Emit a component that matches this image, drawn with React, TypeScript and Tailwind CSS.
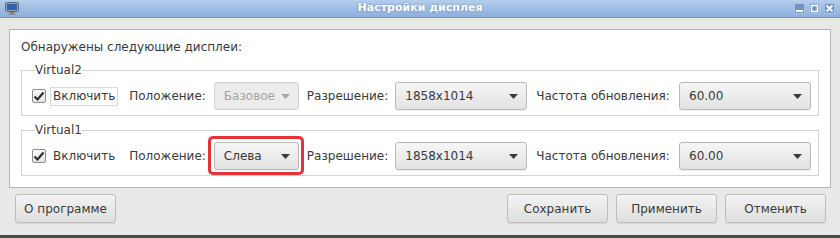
import type { ReactNode } from "react";

const font = { fontFamily: '"DejaVu Sans", "Liberation Sans", sans-serif' };

function ComboArrow({ dim }: { dim?: boolean }) {
  return (
    <svg width="9" height="5" viewBox="0 0 9 5" className="ml-auto shrink-0">
      <path d="M0 0 L9 0 L4.5 5 Z" fill={dim ? "#a6a6a6" : "#3a3a3a"} />
    </svg>
  );
}

function Combo({ value, width, disabled, highlight }: { value: string; width: string; disabled?: boolean; highlight?: boolean }) {
  return (
    <div className={`relative shrink-0 ${width}`}>
      <div
        className={
          disabled
            ? "flex h-[28px] items-center gap-[6px] rounded-[3px] border border-[#cfcfcf] bg-[#ececec] pl-[9px] pr-[8px] text-[12px] text-[#a3a3a3]"
            : "flex h-[28px] items-center gap-[6px] rounded-[3px] border border-[#b9b9b9] bg-gradient-to-b from-[#f6f6f6] to-[#e2e2e2] pl-[9px] pr-[8px] text-[12px] text-[#3a3a3a] shadow-[0_1px_0_rgba(0,0,0,0.06)]"
        }
      >
        <span className="whitespace-nowrap">{value}</span>
        <ComboArrow dim={disabled} />
      </div>
      {highlight && (
        <div className="pointer-events-none absolute -bottom-[5px] -left-[6px] -right-[5px] -top-[6px] rounded-[5px] border-[3px] border-[#e5323a]" />
      )}
    </div>
  );
}

function CheckBox() {
  return (
    <div className="flex h-[14px] w-[14px] shrink-0 items-center justify-center rounded-[2px] border border-[#8e8e8e] bg-gradient-to-b from-[#fafafa] to-[#e4e4e4]">
      <svg width="12" height="11" viewBox="0 0 12 11">
        <path d="M1.5 5.5 L4.5 8.5 L10.5 1.5" fill="none" stroke="#2c2c2c" strokeWidth="2.2" />
      </svg>
    </div>
  );
}

function Group({ name, focus, position, disabledPos, highlight }: { name: string; focus?: boolean; position: string; disabledPos?: boolean; highlight?: boolean }) {
  return (
    <fieldset className="border border-[#d3d3d3] pb-[5px] pl-[10px] pr-[7px] pt-[4px]">
      <legend className="ml-[3px] px-0 text-[12px] leading-[16px] text-[#3a3a3a]">{name}</legend>
      <div className="flex items-center whitespace-nowrap text-[12px] text-[#3a3a3a]">
        <CheckBox />
        <span className={`ml-[4px] border px-[2px] leading-[17px] ${focus ? "border-[#d9d9d9] bg-white" : "border-transparent"}`}>Включить</span>
        <span className="ml-[11px]">Положение:</span>
        <div className="ml-[8px]">
          <Combo value={position} width="w-[85px]" disabled={disabledPos} highlight={highlight} />
        </div>
        <span className="ml-[8px]">Разрешение:</span>
        <div className="ml-[7px]">
          <Combo value="1858x1014" width="w-[132px]" />
        </div>
        <span className="ml-[9px]">Частота обновления:</span>
        <div className="ml-auto">
          <Combo value="60.00" width="w-[132px]" />
        </div>
      </div>
    </fieldset>
  );
}

function Button({ children, width }: { children: ReactNode; width: string }) {
  return (
    <button
      type="button"
      className={`${width} flex h-[29px] items-center justify-center rounded-[3px] border border-[#bdbdbd] bg-gradient-to-b from-[#f3f3f3] to-[#dfdfdf] text-[12px] text-[#3a3a3a] shadow-[0_1px_0_rgba(0,0,0,0.06)]`}
    >
      {children}
    </button>
  );
}

function WinButton({ kind }: { kind: "min" | "max" | "close" }) {
  return (
    <div className="flex h-[11px] w-[11px] items-center justify-center border border-[#a9c1e2] bg-[#7393c2]">
      <svg width="9" height="9" viewBox="0 0 9 9">
        {kind === "min" && <rect x="1" y="6" width="7" height="2" fill="#fff" />}
        {kind === "max" && <rect x="1.5" y="1.5" width="6" height="6" fill="none" stroke="#fff" strokeWidth="1.6" />}
        {kind === "close" && <path d="M1.5 1.5 L7.5 7.5 M7.5 1.5 L1.5 7.5" stroke="#fff" strokeWidth="1.8" />}
      </svg>
    </div>
  );
}

export default function App() {
  return (
    <div className="flex h-[238px] w-[840px] flex-col overflow-hidden bg-[#e8e8e7]" style={font}>
      <div className="relative flex h-[18px] shrink-0 items-center border-b border-[#7293c2] bg-gradient-to-b from-[#b4cdeb] to-[#8cafdc] px-[5px]">
        <svg width="14" height="13" viewBox="0 0 14 13">
          <rect x="0.5" y="0.5" width="13" height="9" rx="1" fill="#9aa3ad" stroke="#5e6670" />
          <rect x="2" y="2" width="10" height="6" fill="#2f63b8" />
          <rect x="5" y="10" width="4" height="1.5" fill="#6c737c" />
          <rect x="3" y="11.5" width="8" height="1.5" fill="#8a9099" />
        </svg>
        <span className="absolute inset-x-0 text-center text-[11px] font-bold text-white [text-shadow:0_0_2px_rgba(60,90,140,0.6)]">Настройки дисплея</span>
        <div className="relative ml-auto flex gap-[4px]">
          <WinButton kind="min" />
          <WinButton kind="max" />
          <WinButton kind="close" />
        </div>
      </div>

      <div className="flex flex-col px-[9px] pt-[11px]">
        <div className="flex h-[159px] flex-col border border-[#b5b5b5] bg-white px-[11px] pt-[9px]">
          <div className="text-[12px] leading-[16px] text-[#3a3a3a]">Обнаружены следующие дисплеи:</div>
          <div className="mt-[7px] flex flex-col gap-[6px]">
            <Group name="Virtual2" focus position="Базовое" disabledPos />
            <Group name="Virtual1" position="Слева" highlight />
          </div>
        </div>

        <div className="mt-[6px] flex items-center gap-[8px] pl-[6px] pr-[5px]">
          <Button width="w-[101px]">О программе</Button>
          <div className="flex-1" />
          <Button width="w-[101px]">Сохранить</Button>
          <Button width="w-[101px]">Применить</Button>
          <Button width="w-[101px]">Отменить</Button>
        </div>
      </div>
      <div className="mt-auto h-[3px] bg-[#4a4a4a]" />
    </div>
  );
}
